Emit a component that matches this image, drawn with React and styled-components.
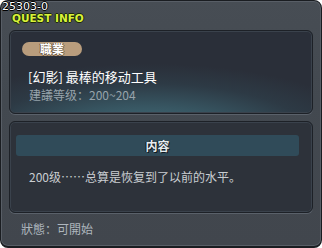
import React from 'react';
import styled, { createGlobalStyle } from 'styled-components';

const Global = createGlobalStyle`
  body {
    margin: 0;
    background: #ffffff;
    font-family: 'Noto Sans CJK SC', 'Noto Sans', sans-serif;
  }
`;

const Window = styled.div`
  position: relative;
  box-sizing: border-box;
  width: 322px;
  height: 248px;
  background: linear-gradient(180deg, #474d54 0%, #434950 40%, #41464d 100%);
  border: 1px solid #1a1d21;
  border-bottom-width: 2px;
  border-radius: 8px;
  box-shadow: inset 0 0 0 1px #585e66;
  display: flex;
  flex-direction: column;
  padding: 0 8px;
`;

const Header = styled.div`
  height: 29px;
  position: relative;
`;

const QuestId = styled.div`
  position: absolute;
  left: -7px;
  top: 0;
  font-family: 'DejaVu Sans', sans-serif;
  font-size: 11px;
  line-height: 11px;
  color: #ffffff;
  text-shadow: 1px 0 0 #000, -1px 0 0 #000, 0 1px 0 #000, 0 -1px 0 #000;
`;

const Title = styled.div`
  position: absolute;
  left: 3px;
  top: 12px;
  font-family: 'DejaVu Sans', sans-serif;
  font-weight: bold;
  font-size: 10.5px;
  line-height: 10px;
  color: #d9f23a;
  text-shadow: 1px 0 0 #1c2a08, -1px 0 0 #1c2a08, 0 1px 0 #1c2a08, 0 -1px 0 #1c2a08;
`;

const Panel = styled.div`
  box-sizing: border-box;
  height: ${p => p.h}px;
  border: 1px solid #1d2127;
  border-radius: 6px;
  box-shadow: 0 1px 0 #5a616a, inset 0 0 0 1px #3a424c;
  background: ${p => p.glow
    ? 'radial-gradient(ellipse 75% 85% at 45% 125%, #46737f 0%, #375561 40%, #2d3a45 72%, #2a2f39 100%)'
    : '#2d323a'};
  display: flex;
  flex-direction: column;
`;

const JobPanel = styled(Panel)`
  padding: 11px 0 0 12px;
`;

const Badge = styled.div`
  width: 60px;
  height: 14px;
  border-radius: 7px;
  background: #b99d7d;
  color: #ffffff;
  font-weight: bold;
  font-size: 12px;
  line-height: 14px;
  text-align: center;
  text-shadow: 1px 0 0 #6b553c, -1px 0 0 #6b553c, 0 1px 0 #6b553c;
`;

const QuestName = styled.div`
  margin-top: 13px;
  margin-left: 6px;
  color: #ffffff;
  font-size: 13px;
  line-height: 16px;
`;

const Level = styled.div`
  margin-top: 3px;
  margin-left: 7px;
  color: #97a3ab;
  font-size: 12px;
  line-height: 14px;
`;

const Gap = styled.div`
  height: 7px;
  flex: none;
`;

const ContentPanel = styled(Panel)`
  padding: 13px 13px 0 6px;
`;

const SectionBar = styled.div`
  height: 21px;
  border-radius: 3px;
  background: #304b59;
  color: #e6ecef;
  font-weight: bold;
  font-size: 12px;
  line-height: 21px;
  text-align: center;
  text-shadow: 1px 1px 0 #111820, -1px 0 0 #111820;
`;

const Body = styled.div`
  margin-top: 14px;
  margin-left: 13px;
  color: #c9cdd1;
  font-size: 12px;
  line-height: 14px;
`;

const Status = styled.div`
  margin-top: 9px;
  margin-left: 12px;
  color: #aeb6bd;
  font-size: 12px;
  line-height: 14px;
`;

export default function App() {
  return (
    <>
      <Global />
      <Window>
        <Header>
          <QuestId>25303-0</QuestId>
          <Title>QUEST INFO</Title>
        </Header>
        <JobPanel h={84} glow>
          <Badge>職業</Badge>
          <QuestName>[幻影] 最棒的移动工具</QuestName>
          <Level>建議等级：200~204</Level>
        </JobPanel>
        <Gap />
        <ContentPanel h={92}>
          <SectionBar>内容</SectionBar>
          <Body>200级……总算是恢复到了以前的水平。</Body>
        </ContentPanel>
        <Status>狀態：可開始</Status>
      </Window>
    </>
  );
}
